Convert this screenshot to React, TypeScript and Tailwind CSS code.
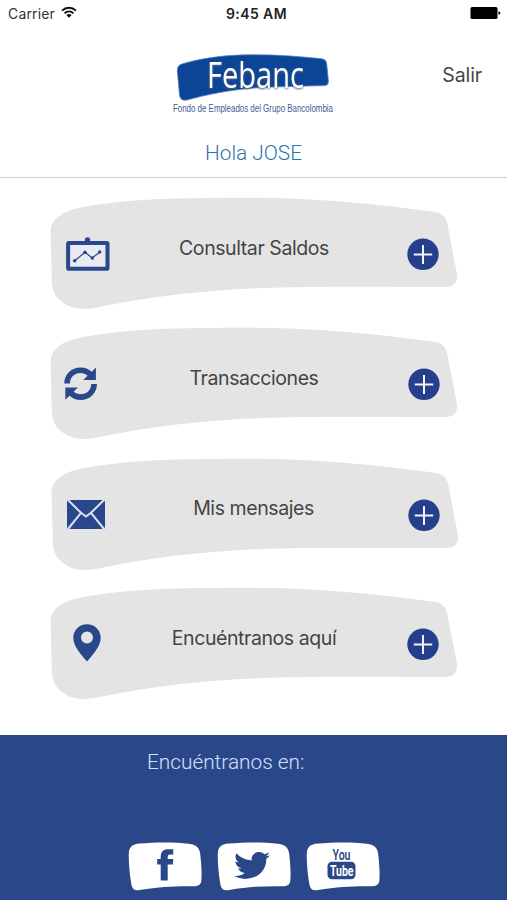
import type { ReactNode } from 'react'
import { FaTwitter } from 'react-icons/fa'

interface MenuCardProps {
  label: string
  icon: ReactNode
  className?: string
  labelClassName?: string
  plusClassName?: string
}

function StatusBar() {
  return (
    <div className="flex h-7 items-center pl-2 pr-1.5 font-['Inter',sans-serif] text-black">
      <div className="flex flex-1 items-center gap-1.5">
        <span className="-mt-0.5 text-[14px] tracking-[0.15px] text-[#333]">Carrier</span>
        <svg width="16" height="13" viewBox="0 0 16 13" fill="none" stroke="#111" strokeWidth="1.9" className="-mt-1">
          <path d="M1 4.6C5 .8 11 .8 15 4.6" />
          <path d="M3.5 7.3C6.2 4.8 9.8 4.8 12.5 7.3" />
          <path d="M8 11.8L5.3 9.1C6.9 7.7 9.1 7.7 10.7 9.1Z" fill="#111" stroke="none" />
        </svg>
      </div>
      <span className="-mt-0.5 ml-1 text-[14px] font-semibold tracking-[0.4px] text-[#222]">9:45 AM</span>
      <div className="flex flex-1 justify-end">
        <svg width="31" height="12" viewBox="0 0 31 12" className="-mt-0.5">
          <rect x="0.5" width="27" height="12" rx="1.5" />
          <path d="M28.5 4.2C31 4.8 31 7.2 28.5 7.8Z" />
        </svg>
      </div>
    </div>
  )
}

function Logo() {
  return (
    <svg width="170" height="68" viewBox="168 50 170 68" className="block overflow-visible">
      <path
        d="M177.3 71Q177 65.3 182 64C205 57 230 54.8 252 54.8C276 54.5 300 56.5 322 58.8Q326 59.4 326.6 63L328.4 81Q328.6 85.3 325 85.6C300 86.3 277 86.5 254 88C229 90 207 94.5 187 100Q180.8 101.2 179.6 96Z"
        fill="#0d4596"
        stroke="#557fba"
        strokeWidth="0.8"
      />
      <text
        x="207"
        y="88"
        textLength="97"
        lengthAdjust="spacingAndGlyphs"
        fontSize="37"
        fill="#fff"
        className="font-['Open_Sans',sans-serif] drop-shadow-[0_1px_1px_#4a5f86]"
      >
        Febanc
      </text>
      <text
        x="173"
        y="112.4"
        textLength="160"
        lengthAdjust="spacingAndGlyphs"
        fontSize="10"
        fill="#3f5a96"
        className="font-['Liberation_Sans',sans-serif]"
      >
        Fondo de Empleados del Grupo Bancolombia
      </text>
    </svg>
  )
}

function ChartIcon() {
  return (
    <svg width="44" height="34" viewBox="0 0 44 34" className="ml-[16px] mt-[40px] text-[#2b478b]">
      <circle cx="21.5" cy="2.9" r="2.7" fill="currentColor" />
      <rect x="2.1" y="6" width="39.4" height="25.7" rx="0.8" fill="#e8e9f1" stroke="currentColor" strokeWidth="4" />
      <g fill="currentColor">
        <path d="M8.7 23.7L19 15.3L26.3 21L33.7 15" fill="none" stroke="currentColor" strokeWidth="1.2" />
        <circle cx="8.7" cy="23.7" r="1.8" />
        <circle cx="19" cy="15.3" r="1.7" />
        <circle cx="26.3" cy="21" r="1.7" />
        <circle cx="33.7" cy="15" r="1.7" />
      </g>
    </svg>
  )
}

function RefreshIcon() {
  return (
    <svg width="34" height="34" viewBox="0 0 34 34" fill="#2b478b" className="ml-[14px] mt-[40px]">
      <path d="M0.2 16.4C.5 7 7.5.4 16.5.4C21 .4 24.7 1.9 27.7 4.7L31.9.6V13H19.3L23.5 8.8C21.5 7 19.2 6.1 16.5 6.1C10.5 6.1 6.2 10.3 6 16.4Z" />
      <path
        d="M0.2 16.4C.5 7 7.5.4 16.5.4C21 .4 24.7 1.9 27.7 4.7L31.9.6V13H19.3L23.5 8.8C21.5 7 19.2 6.1 16.5 6.1C10.5 6.1 6.2 10.3 6 16.4Z"
        transform="rotate(180 16.6 16.7)"
      />
    </svg>
  )
}

function MailIcon() {
  return (
    <svg width="40" height="31" viewBox="0 0 40 31" className="ml-[15px] mt-[41px]">
      <rect x="1" y="1" width="38" height="29" rx="2" fill="#2b478b" />
      <path d="M2 1L15 13.8L20 17.5L25 13.8L38 1M2 30L15 13.8M38 30L25 13.8" fill="none" stroke="#dce2f2" strokeWidth="2" />
    </svg>
  )
}

function PinIcon() {
  return (
    <svg width="28" height="38" viewBox="0 0 28 38" className="ml-[23px] mt-[37px]">
      <path
        d="M14 .3C6.2.3.3 6.2.3 13.8C.3 21.2 6 28.5 14 37.5C22 28.5 27.7 21.2 27.7 13.8C27.7 6.2 21.8.3 14 .3ZM14 7.6A6 6 0 1 1 14 19.6A6 6 0 1 1 14 7.6Z"
        fill="#2b478b"
        fillRule="evenodd"
      />
    </svg>
  )
}

function PlusIcon() {
  return (
    <svg width="32" height="32" viewBox="0 0 32 32">
      <circle cx="16" cy="16.3" r="15.7" fill="#263f8c" />
      <path d="M16 7.1V25.9M6.8 16.5H25.2" stroke="#f4f5fb" strokeWidth="2" />
    </svg>
  )
}

function MenuCard({ label, icon, className = '', labelClassName = 'mt-[37px]', plusClassName = 'pl-[39px]' }: MenuCardProps) {
  return (
    <button type="button" className={`relative flex h-[130px] w-[408px] items-start ${className}`}>
      <svg width="408" height="113" viewBox="0 0 408 113" className="absolute left-0 top-0">
        <path
          d="M.5 33C1.5 22 13 14.5 27 11.3C75 1.5 130 .8 200 .8C265 .8 325 7 384 14.8C392 16 396 20 397.3 27L406.8 76C408.3 84 404.5 89.8 396 90C350 90.3 290 89 220 90.8C160 92.5 105 99 52 109.5C38 112.8 24 113.2 16 107.5C5 101.5 1.8 93 1.8 82Z"
          fill="#e4e4e4"
        />
      </svg>
      <div className="relative grid h-full w-full grid-cols-[90px_1fr_90px] items-start text-left">
        <span>{icon}</span>
        <span
          className={`text-center font-['Inter',sans-serif] text-[19.5px] leading-[28px] tracking-[-0.42px] whitespace-nowrap text-[#444] ${labelClassName}`}
        >
          {label}
        </span>
        <span className={`mt-[41px] ${plusClassName}`}>
          <PlusIcon />
        </span>
      </div>
    </button>
  )
}

function SocialCard({ children }: { children: ReactNode }) {
  return (
    <a className="relative flex h-12 w-[74px] justify-center text-[#2a4789]">
      <svg width="74" height="49" viewBox="0 0 74 49" className="absolute left-0 top-0">
        <path
          d="M.7 13C.7 5 4 2.3 12 1.6C28 0 47 0 61 1.8C68 2.8 71.5 5.5 72.2 12C73.3 22 74 31 73.3 39Q72.8 44 67 44.2C48 44 33 44.3 12 48Q4.5 49.3 3.5 43C1.7 33 .8 23 .7 13Z"
          fill="#fff"
        />
      </svg>
      <span className="relative">{children}</span>
    </a>
  )
}

function FacebookIcon() {
  return (
    <svg width="17" height="32" viewBox="0 0 17 32" fill="currentColor" className="mt-[7px]">
      <path d="M3.7 31.6V15.5H.2V10H3.7V8C3.7 2.8 6.3.2 11 .2H16.3V5.5H13Q10.7 5.5 10.7 7.8V10H16.3L15.8 15.5H10.7V31.6Z" />
    </svg>
  )
}

function YoutubeIcon() {
  return (
    <svg width="30" height="34" viewBox="0 0 30 34" fill="currentColor" className="mr-0.5 mt-[5px] overflow-visible font-['Roboto',sans-serif]">
      <text x="5.5" y="13" fontSize="15.5" fontWeight="600" textLength="18" lengthAdjust="spacingAndGlyphs">You</text>
      <rect x="0.5" y="14.7" width="28" height="17.6" rx="4.5" />
      <text x="3" y="29.3" fontSize="15.5" fontWeight="700" textLength="23.5" lengthAdjust="spacingAndGlyphs" fill="#fff">Tube</text>
    </svg>
  )
}

export default function App() {
  return (
    <main className="flex h-[900px] w-[507px] flex-col overflow-hidden bg-white">
      <StatusBar />
      <header className="grid h-[150px] grid-cols-[168px_170px_1fr] items-start border-b border-[#cfcfcf] pt-[22px]">
        <span />
        <div>
          <Logo />
          <p className="mt-5 pl-px text-center font-['Roboto',sans-serif] text-[20.8px] leading-[30px] font-light text-[#2b75b0]">Hola JOSE</p>
        </div>
        <a className="mt-[11px] pr-[25px] text-right font-['Inter',sans-serif] text-[19.5px] leading-[28px] tracking-[-0.1px] text-[#444]">Salir</a>
      </header>

      <nav className="flex h-[557px] flex-col pl-[50px] pt-[19px]">
        <MenuCard label="Consultar Saldos" icon={<ChartIcon />} />
        <MenuCard label="Transacciones" icon={<RefreshIcon />} plusClassName="pl-[40px]" />
        <MenuCard label="Mis mensajes" icon={<MailIcon />} className="ml-px mt-px" labelClassName="mt-[36px] pr-[3px]" />
        <MenuCard label="Encuéntranos aquí" icon={<PinIcon />} className="-mt-px" />
      </nav>

      <footer className="flex h-[165px] flex-col bg-[#2a4789]">
        <p className="ml-[147px] mt-[12px] font-['Roboto',sans-serif] text-[20.8px] leading-[30px] font-light text-[#d3e0fa]">Encuéntranos en:</p>
        <div className="ml-[128px] mt-[65px] flex gap-[15px]">
          <SocialCard>
            <FacebookIcon />
          </SocialCard>
          <SocialCard>
            <FaTwitter className="mr-1 mt-[7px] h-[33px] w-[36px]" preserveAspectRatio="none" />
          </SocialCard>
          <SocialCard>
            <YoutubeIcon />
          </SocialCard>
        </div>
      </footer>
    </main>
  )
}
